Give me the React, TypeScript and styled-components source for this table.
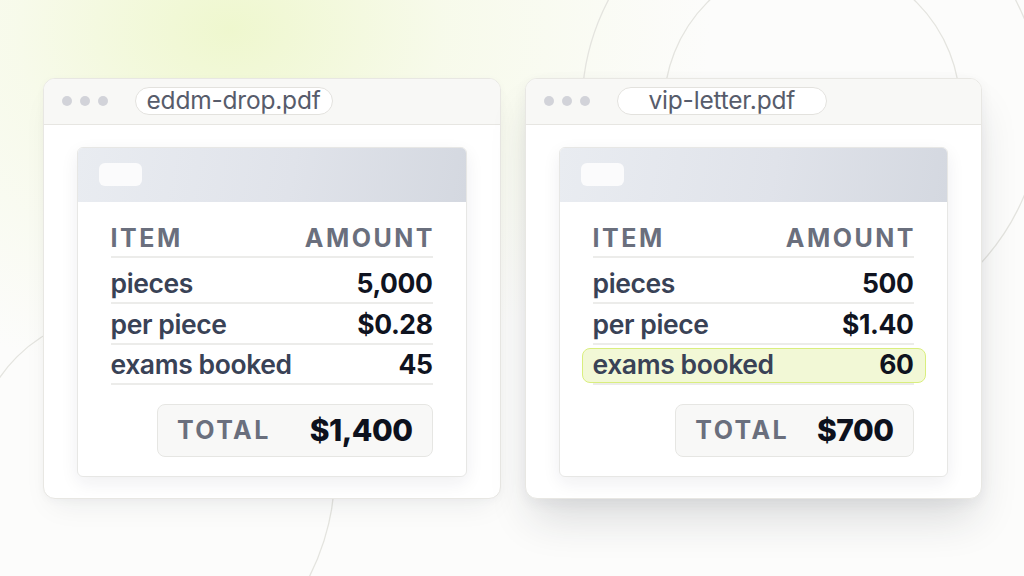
import React from "react";
import styled, { createGlobalStyle } from "styled-components";

const GlobalStyle = createGlobalStyle`
  html, body { margin: 0; padding: 0; }
  body {
    font-family: Inter, "Noto Sans", "Liberation Sans", sans-serif;
    background: #fcfcfb;
    -webkit-font-smoothing: antialiased;
  }
  * { box-sizing: border-box; }
`;

const Page = styled.div`
  position: relative;
  width: 1024px;
  height: 576px;
  overflow: hidden;
  display: flex;
  align-items: center;
  justify-content: center;
  gap: 24px;
  background:
    radial-gradient(ellipse 480px 360px at 230px 30px, rgba(238, 247, 204, 0.95) 0%, rgba(244, 249, 224, 0.6) 45%, rgba(252, 252, 251, 0) 100%),
    #fcfcfb;
`;

const Backdrop = styled.svg`
  position: absolute;
  inset: 0;
  z-index: 0;
  pointer-events: none;
`;

const Window = styled.section<{ $elevated?: boolean }>`
  position: relative;
  z-index: 1;
  width: ${(p) => (p.$elevated ? 457 : 458)}px;
  height: 421px;
  background: #ffffff;
  border: 1px solid #e8e7e3;
  border-radius: 12px;
  overflow: hidden;
  display: flex;
  flex-direction: column;
  box-shadow: ${(p) =>
    p.$elevated
      ? "0 26px 44px -8px rgba(30, 35, 50, 0.16), 0 4px 14px rgba(30, 35, 50, 0.05)"
      : "0 14px 30px -10px rgba(30, 35, 50, 0.08), 0 2px 8px rgba(30, 35, 50, 0.03)"};
`;

const TitleBar = styled.header`
  height: 46px;
  flex: none;
  display: flex;
  align-items: center;
  padding-left: 18px;
  background: #f8f8f6;
  border-bottom: 1px solid #e7e6e2;
`;

const Dots = styled.div`
  display: flex;
  gap: 8px;
  margin-right: 27px;
`;

const Dot = styled.span`
  width: 10px;
  height: 10px;
  border-radius: 50%;
  background: #d2d3d9;
`;

const FilePill = styled.div<{ $padX: number }>`
  height: 28px;
  display: flex;
  align-items: center;
  padding: 0 ${(p) => p.$padX}px 2px;
  background: #ffffff;
  border: 1px solid #e3e2de;
  border-radius: 14px;
  font-size: 24.5px;
  font-weight: 400;
  letter-spacing: -0.2px;
  color: #575c6b;
  line-height: 1;
`;

const Card = styled.div`
  margin: 22px 33px 0;
  height: 330px;
  background: #ffffff;
  border: 1px solid #e7e7e5;
  border-radius: 6px;
  overflow: hidden;
  box-shadow: 0 6px 18px rgba(30, 35, 50, 0.07);
  display: flex;
  flex-direction: column;
`;

const CardHeader = styled.div`
  height: 54px;
  flex: none;
  display: flex;
  align-items: center;
  padding-left: 21px;
  background: linear-gradient(100deg, #e9ecf1 0%, #e0e3ea 55%, #d4d8e0 100%);
`;

const HeaderChip = styled.div`
  width: 43px;
  height: 23px;
  border-radius: 6px;
  background: #fbfbfc;
`;

const CardBody = styled.div`
  padding: 20px 33px 0;
  display: flex;
  flex-direction: column;
`;

const HeadRow = styled.div`
  height: 36px;
  display: flex;
  align-items: center;
  justify-content: space-between;
  border-bottom: 2px solid #ececea;
  font-size: 25px;
  font-weight: 700;
  letter-spacing: 2.5px;
  color: #6a6f7d;
  margin-bottom: 5px;
`;

const HeadCell = styled.span<{ $last?: boolean }>`
  margin-right: ${(p) => (p.$last ? "-2.5px" : "0")};
  line-height: 1;
`;

const Row = styled.div<{ $highlight?: boolean }>`
  position: relative;
  height: 41px;
  display: flex;
  align-items: center;
  justify-content: space-between;
  border-bottom: 2px solid #ececea;
  font-size: 26.5px;
  line-height: 1;
  letter-spacing: -0.4px;
  &:last-child { height: 40px; }
  ${(p) =>
    p.$highlight
      ? `
    &::before {
      content: "";
      position: absolute;
      left: -11px;
      right: -12px;
      top: 3px;
      bottom: 0px;
      border-radius: 8px;
      background: #f2f8d6;
      border: 1.5px solid #d9ee7e;
    }
  `
      : ""}
`;

const Label = styled.span`
  position: relative;
  font-weight: 600;
  color: #394256;
  padding-top: 2px;
`;

const Value = styled.span`
  position: relative;
  font-weight: 700;
  color: #0f1320;
  padding-top: 2px;
`;

const TotalWrap = styled.div`
  display: flex;
  justify-content: flex-end;
  margin-top: 19px;
`;

const TotalBox = styled.div<{ $gap: number }>`
  height: 53px;
  display: flex;
  align-items: center;
  gap: ${(p) => p.$gap}px;
  padding: 0 19px;
  background: #f8f8f7;
  border: 1px solid #e6e6e3;
  border-radius: 8px;
`;

const TotalLabel = styled.span`
  font-size: 25px;
  font-weight: 700;
  letter-spacing: 2.4px;
  color: #6a6f7d;
  line-height: 1;
`;

const TotalValue = styled.span`
  font-size: 30px;
  font-weight: 800;
  letter-spacing: -0.5px;
  color: #0d111d;
  line-height: 1;
`;

type Item = { label: string; value: string; highlight?: boolean };

type Doc = {
  file: string;
  padX: number;
  items: Item[];
  total: string;
  gap: number;
  elevated?: boolean;
};

const docs: Doc[] = [
  {
    file: "eddm-drop.pdf",
    padX: 11,
    items: [
      { label: "pieces", value: "5,000" },
      { label: "per piece", value: "$0.28" },
      { label: "exams booked", value: "45" },
    ],
    total: "$1,400",
    gap: 39,
  },
  {
    file: "vip-letter.pdf",
    padX: 31,
    items: [
      { label: "pieces", value: "500" },
      { label: "per piece", value: "$1.40" },
      { label: "exams booked", value: "60", highlight: true },
    ],
    total: "$700",
    gap: 28,
    elevated: true,
  },
];

function DocWindow({ doc }: { doc: Doc }) {
  return (
    <Window $elevated={doc.elevated}>
      <TitleBar>
        <Dots>
          <Dot />
          <Dot />
          <Dot />
        </Dots>
        <FilePill $padX={doc.padX}>{doc.file}</FilePill>
      </TitleBar>
      <Card>
        <CardHeader>
          <HeaderChip />
        </CardHeader>
        <CardBody>
          <HeadRow>
            <HeadCell>ITEM</HeadCell>
            <HeadCell $last>AMOUNT</HeadCell>
          </HeadRow>
          <div>
            {doc.items.map((it) => (
              <Row key={it.label} $highlight={it.highlight}>
                <Label>{it.label}</Label>
                <Value>{it.value}</Value>
              </Row>
            ))}
          </div>
          <TotalWrap>
            <TotalBox $gap={doc.gap}>
              <TotalLabel>TOTAL</TotalLabel>
              <TotalValue>{doc.total}</TotalValue>
            </TotalBox>
          </TotalWrap>
        </CardBody>
      </Card>
    </Window>
  );
}

export default function App() {
  return (
    <>
      <GlobalStyle />
      <Page>
        <Backdrop width="1024" height="576" viewBox="0 0 1024 576">
          <g fill="none" stroke="#e4e4df" strokeWidth="1.3">
            <circle cx="812" cy="107" r="148" />
            <circle cx="812" cy="107" r="230" />
            <path d="M -17 410 A 146 146 0 0 1 70 323" />
            <path d="M 334 449.5 A 235 235 0 0 1 280 621" />
          </g>
        </Backdrop>
        {docs.map((d) => (
          <DocWindow key={d.file} doc={d} />
        ))}
      </Page>
    </>
  );
}
